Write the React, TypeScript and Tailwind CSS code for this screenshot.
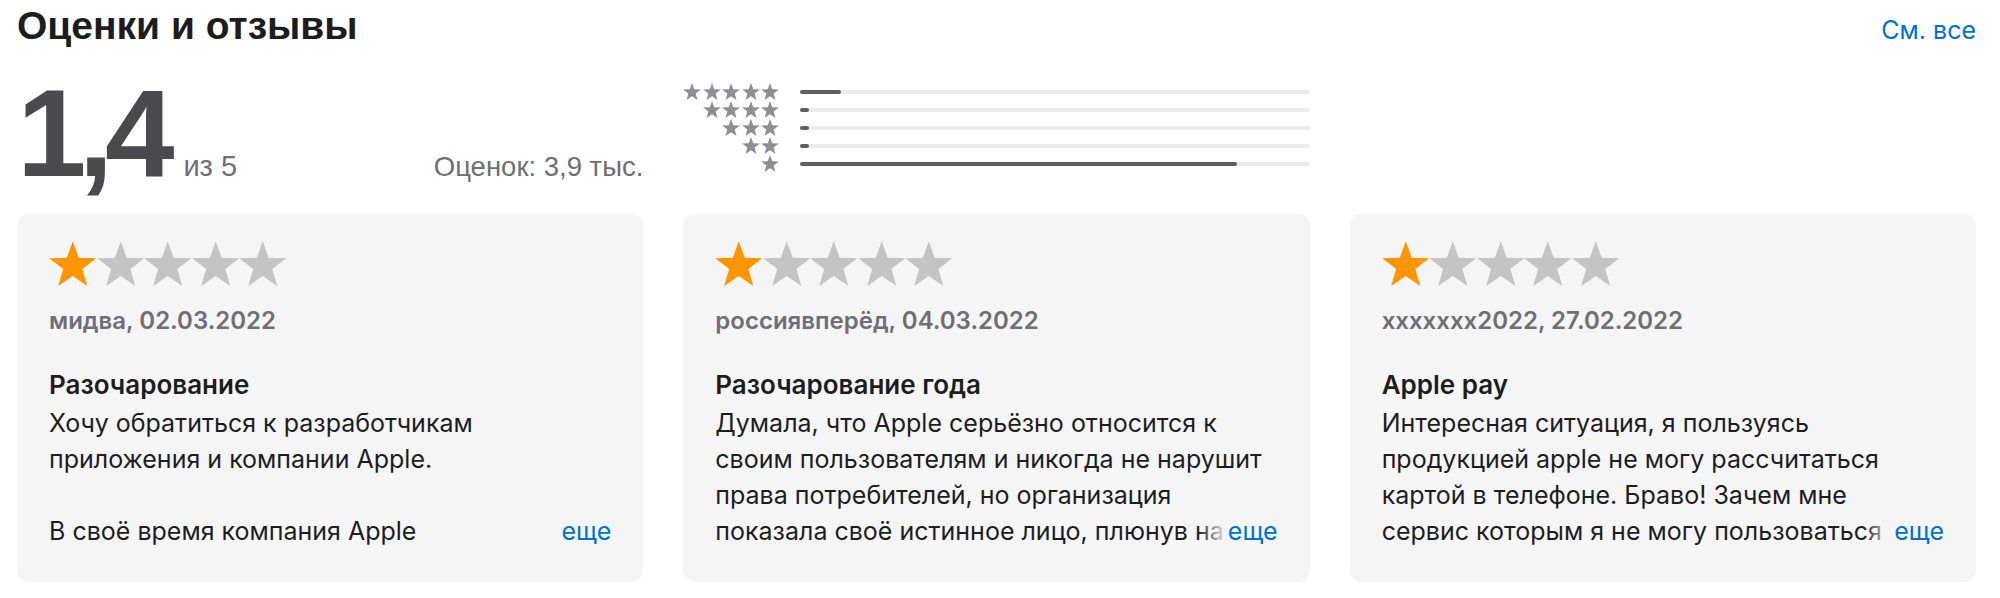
import React from "react";

const STAR = "24,0 30,16.75 47.78,17.27 33.7,28.15 38.69,45.23 24,35.2 9.31,45.23 14.3,28.15 0.22,17.27 18,16.75";

function Star({ className }: { className: string }) {
  return (
    <svg viewBox="0 0 48 46" className={className}>
      <polygon points={STAR} fill="currentColor" />
    </svg>
  );
}

const bars = [
  { stars: 5, fill: "8%" },
  { stars: 4, fill: "1.8%" },
  { stars: 3, fill: "1.8%" },
  { stars: 2, fill: "1.8%" },
  { stars: 1, fill: "85.7%" },
];

const reviews = [
  {
    author: "мидва, 02.03.2022",
    title: "Разочарование",
    lines: ["Хочу обратиться к разработчикам", "приложения и компании Apple.", "", "В своё время компания Apple"],
  },
  {
    author: "россиявперёд, 04.03.2022",
    title: "Разочарование года",
    lines: [
      "Думала, что Apple серьёзно относится к",
      "своим пользователям и никогда не нарушит",
      "права потребителей, но организация",
      "показала своё истинное лицо, плюнув на",
    ],
  },
  {
    author: "xxxxxxx2022, 27.02.2022",
    title: "Apple pay",
    lines: [
      "Интересная ситуация, я пользуясь",
      "продукцией apple не могу рассчитаться",
      "картой в телефоне. Браво! Зачем мне",
      "сервис которым я не могу пользоваться",
    ],
  },
];

function ReviewCard({ author, title, lines }: { author: string; title: string; lines: string[] }) {
  return (
    <div className="rounded-xl bg-[#f5f5f5] px-[32px] pt-[27px] pb-[33px] font-['Inter',sans-serif]">
      <div className="flex h-[46px]">
        {[0, 1, 2, 3, 4].map((i) => (
          <Star key={i} className={`h-[46px] w-[47.5px] ${i === 0 ? "text-[#ff9500]" : "text-[#c4c4c4]"}`} />
        ))}
      </div>
      <div className="mt-[18px] text-[24px] leading-[32px] font-semibold text-[#6e6e73]">{author}</div>
      <div className="mt-[30px] text-[26px] leading-[36px] font-semibold text-[#1d1d1f]">{title}</div>
      <div className="relative mt-[2px] text-[25px] leading-[36px] text-[#1d1d1f]">
        {lines.map((l, i) => (
          <div key={i} className="h-[36px] overflow-hidden whitespace-nowrap">
            {l}
          </div>
        ))}
        <span className="absolute right-0 bottom-0 flex h-[36px]">
          <span className="w-[30px] bg-linear-to-r from-[#f5f5f5]/0 to-[#f5f5f5]" />
          <span className="bg-[#f5f5f5] text-[#0070c9]">еще</span>
        </span>
      </div>
    </div>
  );
}

export default function App() {
  return (
    <div className="min-h-screen bg-white pl-[17px] pr-[24px]">
      <div className="flex items-baseline justify-between pt-[3px]">
        <h2 className="font-['Liberation_Sans',Arial,sans-serif] text-[39px] leading-[46px] font-bold text-[#1d1d1f]">
          Оценки и отзывы
        </h2>
        <a className="font-['Inter',sans-serif] text-[25px] text-[#0070c9]">См. все</a>
      </div>

      <div className="mt-[20px] grid grid-cols-3 gap-x-10">
        <div className="flex items-baseline font-['Liberation_Sans',Arial,sans-serif]">
          <span className="text-[125px] leading-none font-bold tracking-[-0.065em] text-[#4a4a4e]">1,4</span>
          <span className="ml-[17px] text-[29px] text-[#6e6e73]">из 5</span>
          <span className="ml-auto text-[27.5px] text-[#6e6e73]">Оценок: 3,9 тыс.</span>
        </div>
        <div className="mt-[13px]">
          {bars.map((b) => (
            <div key={b.stars} className="flex h-[18px] items-center">
              <div className="flex w-[96px] justify-end gap-[1.5px] text-[#8e8e93]">
                {Array.from({ length: b.stars }).map((_, i) => (
                  <Star key={i} className="h-[17.3px] w-[18px]" />
                ))}
              </div>
              <div className="ml-[21px] h-[4px] flex-1 rounded-full bg-[#ececf0]">
                <div className="h-full rounded-full bg-[#5f5f63]" style={{ width: b.fill }} />
              </div>
            </div>
          ))}
        </div>
      </div>

      <div className="mt-[19px] grid grid-cols-3 gap-10">
        {reviews.map((r) => (
          <ReviewCard key={r.author} {...r} />
        ))}
      </div>
    </div>
  );
}
